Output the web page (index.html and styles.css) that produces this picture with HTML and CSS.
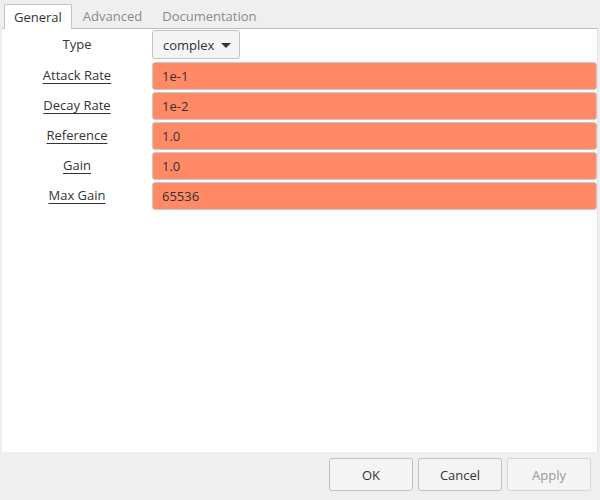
FILE: index.html
```html
<!DOCTYPE html>
<html lang="en">
<head>
    <meta charset="UTF-8">
    <title>Gain Control</title>
    <link rel="stylesheet" href="styles.css">
</head>
<body>

    <div class="tabs">
        <div class="tab active">General</div>
        <div class="tab">Advanced</div>
        <div class="tab">Documentation</div>
    </div>

    <div class="panel">
        <div class="form">
            <label class="plain">Type</label>
            <div class="combo-cell">
                <button class="combo">complex <span class="arrow"></span></button>
            </div>

            <label>Attack Rate</label>
            <div class="field">1e-1</div>

            <label>Decay Rate</label>
            <div class="field">1e-2</div>

            <label>Reference</label>
            <div class="field">1.0</div>

            <label>Gain</label>
            <div class="field">1.0</div>

            <label>Max Gain</label>
            <div class="field">65536</div>
        </div>
    </div>

    <div class="buttons">
        <button class="btn">OK</button>
        <button class="btn">Cancel</button>
        <button class="btn disabled">Apply</button>
    </div>

</body>
</html>
```

FILE: styles.css
```css
body {
    margin: 0;
    width: 600px;
    height: 500px;
    background-color: #efefef;
    font-family: "Open Sans", "DejaVu Sans", sans-serif;
    font-size: 13px;
    color: #333;
    overflow: hidden;
}
.tabs {
    display: flex;
    padding: 4px 0 0 4px;
    height: 24px;
}
.tab {
    padding: 0 10px;
    line-height: 24px;
    color: #8a8a8a;
}
.tab.active {
    padding: 0 9px;
    margin-right: 1px;
    background-color: #fff;
    color: #333;
    border: 1px solid #c4c4c4;
    border-bottom: none;
    border-radius: 2px 2px 0 0;
    position: relative;
    z-index: 1;
    margin-bottom: -1px;
}
.panel {
    margin: 0 2px;
    height: 423px;
    background-color: #fff;
    border-top: 1px solid #bdbdbd;
    border-right: 1px solid #e2e2e2;
}
.form {
    display: grid;
    grid-template-columns: 150px 1fr;
    grid-template-rows: 30px repeat(5, 28px);
    row-gap: 2px;
    padding-top: 1px;
}
label {
    text-align: center;
    text-decoration: underline;
    text-underline-offset: 3px;
    line-height: 27px;
}
label.plain {
    text-decoration: none;
    line-height: 29px;
}
.combo {
    height: 29px;
    width: 88px;
    font-family: inherit;
    font-size: 13px;
    color: #333;
    background-color: #f4f4f4;
    border: 1px solid #c2c2c2;
    border-radius: 3px;
    padding: 0 0 0 10px;
    text-align: left;
}
.arrow {
    display: inline-block;
    margin-left: 3px;
    vertical-align: 2px;
    border-left: 5px solid transparent;
    border-right: 5px solid transparent;
    border-top: 5px solid #333;
}
.field {
    background-color: #ff8a65;
    border: 1px solid #c9c9c9;
    border-radius: 3px;
    padding-left: 9px;
    line-height: 26px;
}
.buttons {
    display: flex;
    justify-content: flex-end;
    gap: 5px;
    padding: 6px 9px 0 0;
}
.btn {
    width: 84px;
    height: 33px;
    font-family: inherit;
    font-size: 13px;
    color: #333;
    background-color: #f4f4f4;
    border: 1px solid #c2c2c2;
    border-radius: 3px;
}
.btn.disabled {
    color: #999;
    border-color: #d6d6d6;
}
```
